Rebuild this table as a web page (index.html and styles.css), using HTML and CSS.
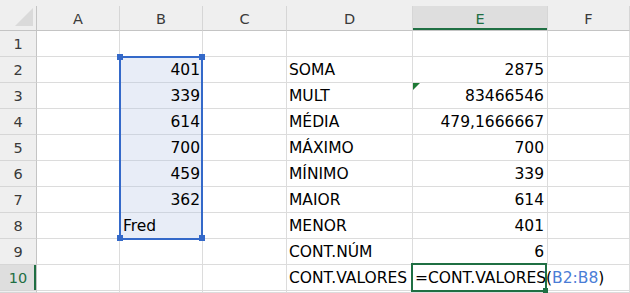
FILE: index.html
```html
<!DOCTYPE html>
<html lang="pt-BR">
<head>
  <meta charset="UTF-8"/>
  <title>Planilha</title>
  <link rel="stylesheet" href="styles.css">
</head>
<body>

  <div class="strip"></div>

  <div class="sheet">
    <div class="grid">
      <!-- column headers -->
      <div class="corner">
        <svg width="18" height="18" viewBox="0 0 18 18"><polygon points="18,0 18,18 0,18" fill="#dadada"/></svg>
      </div>
      <div class="col">A</div>
      <div class="col">B</div>
      <div class="col">C</div>
      <div class="col">D</div>
      <div class="col on">E</div>
      <div class="col">F</div>

      <div class="row">1</div>
      <div class="cell"></div><div class="cell"></div><div class="cell"></div>
      <div class="cell"></div><div class="cell"></div><div class="cell"></div>

      <div class="row">2</div>
      <div class="cell"></div><div class="cell sel num">401</div><div class="cell"></div>
      <div class="cell">SOMA</div><div class="cell num">2875</div><div class="cell"></div>

      <div class="row">3</div>
      <div class="cell"></div><div class="cell sel num">339</div><div class="cell"></div>
      <div class="cell">MULT</div><div class="cell num flag">83466546<span class="err"></span></div><div class="cell"></div>

      <div class="row">4</div>
      <div class="cell"></div><div class="cell sel num">614</div><div class="cell"></div>
      <div class="cell">MÉDIA</div><div class="cell num">479,1666667</div><div class="cell"></div>

      <div class="row">5</div>
      <div class="cell"></div><div class="cell sel num">700</div><div class="cell"></div>
      <div class="cell">MÁXIMO</div><div class="cell num">700</div><div class="cell"></div>

      <div class="row">6</div>
      <div class="cell"></div><div class="cell sel num">459</div><div class="cell"></div>
      <div class="cell">MÍNIMO</div><div class="cell num">339</div><div class="cell"></div>

      <div class="row">7</div>
      <div class="cell"></div><div class="cell sel num">362</div><div class="cell"></div>
      <div class="cell">MAIOR</div><div class="cell num">614</div><div class="cell"></div>

      <div class="row">8</div>
      <div class="cell"></div><div class="cell sel">Fred</div><div class="cell"></div>
      <div class="cell">MENOR</div><div class="cell num">401</div><div class="cell"></div>

      <div class="row">9</div>
      <div class="cell"></div><div class="cell"></div><div class="cell"></div>
      <div class="cell">CONT.NÚM</div><div class="cell num">6</div><div class="cell"></div>

      <div class="row on">10</div>
      <div class="cell"></div><div class="cell"></div><div class="cell"></div>
      <div class="cell">CONT.VALORES</div>
      <div class="cell edit">=CONT.VALORES(<span class="ref">B2:B8</span>)</div>
      <div class="cell"></div>

      <!-- top edge of the next row -->
      <div class="row"></div>
      <div class="cell"></div><div class="cell"></div><div class="cell"></div>
      <div class="cell"></div><div class="cell"></div><div class="cell"></div>
    </div>

    <!-- selection frames drawn on top of the cells -->
    <div class="overlay">
      <div class="range">
        <span class="knob tl"></span><span class="knob tr"></span>
        <span class="knob bl"></span><span class="knob br"></span>
      </div>
      <div class="active"><span class="fill"></span></div>
    </div>
  </div>

</body>
</html>
```

FILE: styles.css
```css
:root {
  --head: #efefef;
  --head-on: #dedede;
  --line: #dcdcdc;
  --head-line: #c4c4c4;
  --green: #1f6f43;
  --blue: #3469c9;
  --sel-bg: #e8edf7;
}

* { box-sizing: border-box; margin: 0; padding: 0; }

body {
  background: #fff;
  font-family: "DejaVu Sans", Verdana, sans-serif;
  color: #111;
  overflow: hidden;
}

.strip {
  height: 6px;
  background: var(--head);
}

.sheet {
  position: relative;
}

.grid,
.overlay {
  display: grid;
  grid-template-columns: 37px 83px 83px 84px 126px 135px 1fr;
  grid-template-rows: 25px repeat(10, 26px) 2px;
}

.overlay {
  position: absolute;
  inset: 0;
  pointer-events: none;
}

/* headers */
.corner {
  background: var(--head);
  border-right: 1px solid var(--head-line);
  border-bottom: 1px solid var(--head-line);
  display: flex;
  align-items: flex-end;
  justify-content: flex-end;
  padding: 0 3px 4px 0;
}

.col {
  background: var(--head);
  border-right: 1px solid #d6d6d6;
  border-bottom: 1px solid var(--head-line);
  text-align: center;
  font-size: 14.5px;
  line-height: 21px;
  padding-top: 3px;
  color: #3a3a3a;
}

.col.on {
  background: var(--head-on);
  color: var(--green);
  box-shadow: inset 0 -2px 0 var(--green);
}

.row {
  background: var(--head);
  border-right: 1px solid var(--head-line);
  border-bottom: 1px solid #d6d6d6;
  text-align: center;
  font-size: 14.5px;
  line-height: 24px;
  padding-top: 1px;
  color: #3a3a3a;
}

.row.on {
  background: var(--head-on);
  color: var(--green);
  box-shadow: inset -2px 0 0 var(--green);
}

/* cells */
.cell {
  border-right: 1px solid var(--line);
  border-bottom: 1px solid var(--line);
  font-size: 15.5px;
  line-height: 24px;
  padding: 1px 2px 0 2px;
  white-space: nowrap;
  color: #000;
}

.cell.num {
  text-align: right;
  padding-right: 3px;
}

.cell.sel {
  background: var(--sel-bg);
  border-bottom-color: #cfd5df;
  padding-left: 3px;
}

.cell.sel.num {
  padding-right: 2px;
}

.cell.flag {
  position: relative;
}

.err {
  position: absolute;
  top: 0;
  left: 0;
  width: 0;
  height: 0;
  border-top: 7px solid #1e7a36;
  border-right: 7px solid transparent;
}

.cell.edit {
  border-right-color: #fff;
}

.ref {
  color: #4a7dd6;
}

/* range B2:B8 */
.range {
  grid-column: 3;
  grid-row: 3 / 10;
  margin: -1px 0 -1px -1px;
  border: 2px solid var(--blue);
  position: relative;
}

.knob {
  position: absolute;
  width: 6px;
  height: 6px;
  background: var(--blue);
}

.knob.tl { top: -4px; left: -4px; }
.knob.tr { top: -4px; right: -4px; }
.knob.bl { bottom: -3px; left: -4px; }
.knob.br { bottom: -3px; right: -4px; }

/* active cell E10 */
.active {
  grid-column: 6;
  grid-row: 11;
  margin: -2px 1px -1px -2px;
  border: 2px solid var(--green);
  position: relative;
}

.fill {
  position: absolute;
  right: -3px;
  bottom: -3px;
  width: 5px;
  height: 5px;
  background: var(--green);
}
```
